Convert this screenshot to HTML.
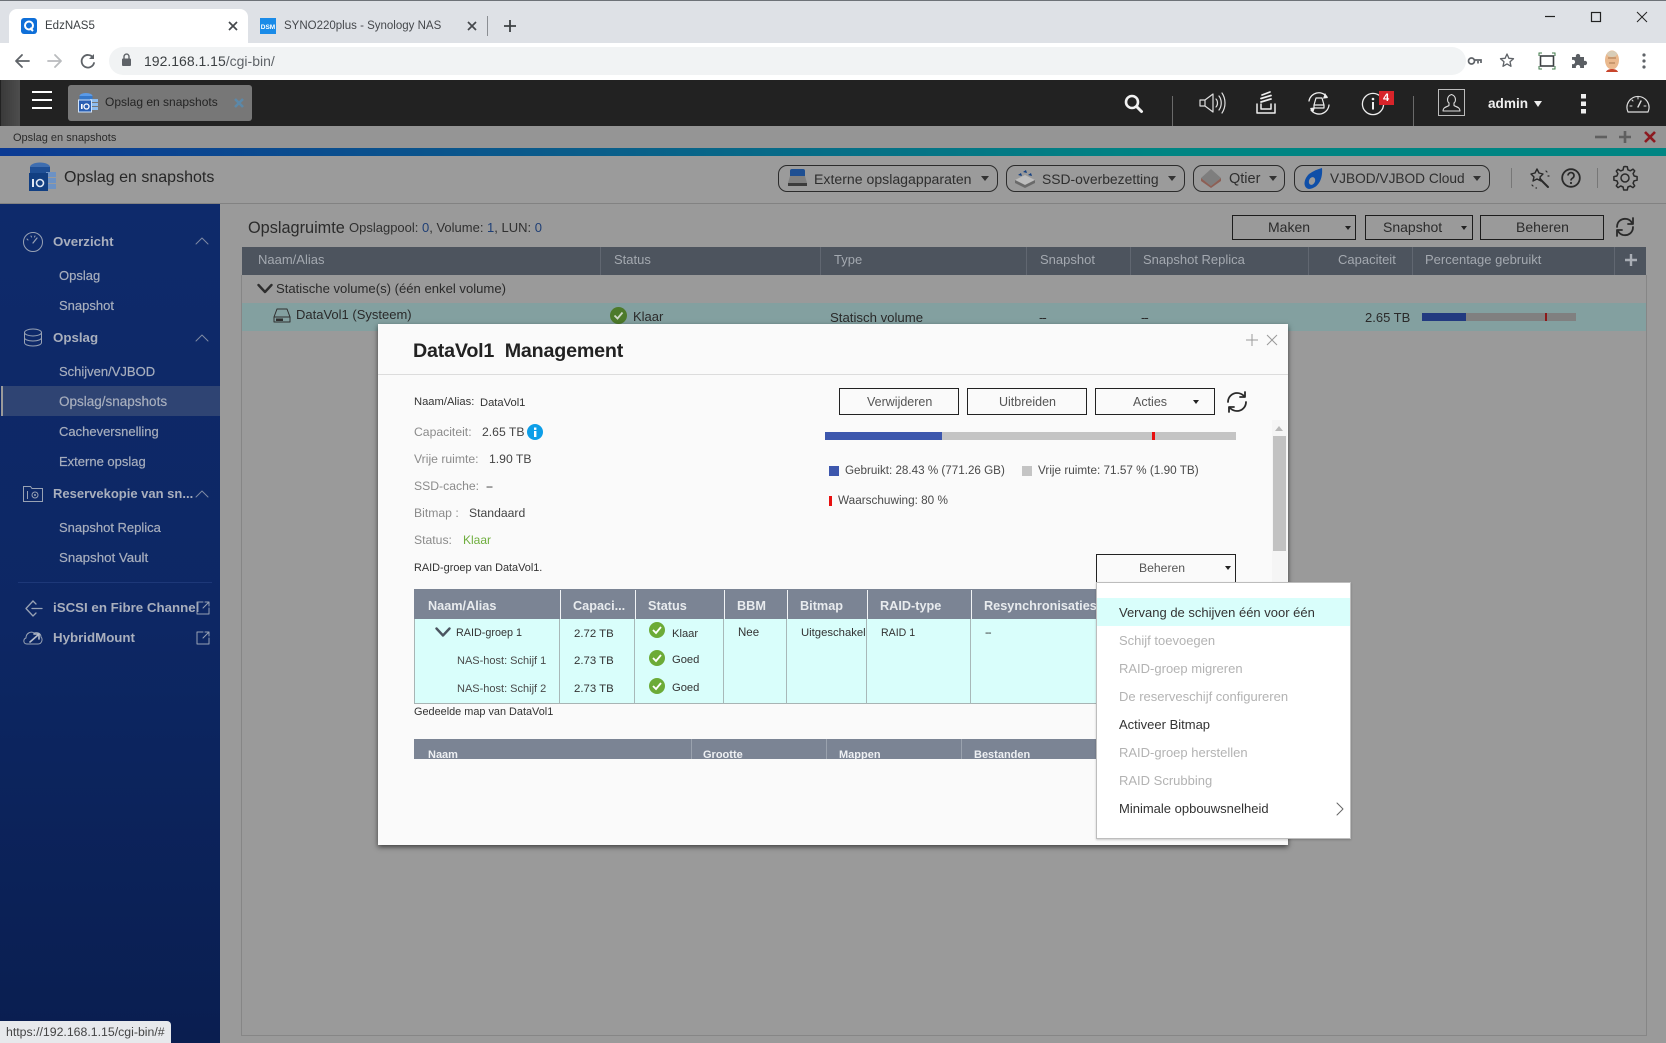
<!DOCTYPE html>
<html><head><meta charset="utf-8"><title>EdzNAS5</title>
<style>
html,body{margin:0;padding:0;width:1666px;height:1043px;overflow:hidden;background:#9a9a9a;font-family:"Liberation Sans",sans-serif}
div,span,svg{position:absolute;box-sizing:border-box}
.t{position:absolute;white-space:nowrap;line-height:0;font-size:12px;color:#333}
.s{fill:none;stroke-linecap:round;stroke-linejoin:round}
.sb{color:#a7aebd;font-size:13px;-webkit-text-stroke:.2px #a7aebd}
.sh{color:#a9afbd;font-size:13.3px;font-weight:bold}
.th{color:#a4a9b0;font-size:13px}
.h2{color:#e8ebee;font-size:12.7px;font-weight:bold}
.btn{border:1px solid #222;background:#fafafa}
.btnd{border:1px solid #1c1c1c}
.pill{border:1px solid #2b2b2b;border-radius:9px;height:27px;top:165px}
.m{font-size:13px;color:#333}
.md{font-size:13px;color:#b3b3b3}
.g{color:#8b8b8b;font-size:12.2px}
.d{color:#444;font-size:12.2px}
.w{color:#333;font-size:11.4px}
.car{width:0;height:0;border-left:4px solid transparent;border-right:4px solid transparent;border-top:5px solid #333}
</style></head><body>

<!-- browser chrome -->
<div style="left:0;top:0;width:1666px;height:43px;background:#dee1e6;border-top:1px solid #6d7278"></div>
<div style="left:9px;top:9px;width:239px;height:34px;background:#fff;border-radius:8px 8px 0 0"></div>
<svg style="left:21px;top:18px" width="16" height="16"><rect width="16" height="16" rx="3" fill="#0f6fd8"/><circle cx="8" cy="7.5" r="4" fill="none" stroke="#fff" stroke-width="2"/><path d="M9 10l3 3" stroke="#fff" stroke-width="2"/></svg>
<span class="t" style="left:45px;top:26px;font-size:11.5px;color:#3c4043">EdzNAS5</span>
<svg style="left:227px;top:20px" width="12" height="12"><path d="M2 2l8 8M10 2l-8 8" stroke="#45484c" stroke-width="1.7"/></svg>
<svg style="left:260px;top:18px" width="16" height="16"><rect width="16" height="16" fill="#1a8be8"/><text x="8" y="11" font-size="6.5" font-weight="bold" text-anchor="middle" fill="#fff" font-family="Liberation Sans">DSM</text></svg>
<span class="t" style="left:284px;top:26px;font-size:11.5px;color:#45484c">SYNO220plus - Synology NAS</span>
<svg style="left:466px;top:20px" width="12" height="12"><path d="M2 2l8 8M10 2l-8 8" stroke="#45484c" stroke-width="1.7"/></svg>
<div style="left:487px;top:16px;width:1px;height:20px;background:#8b8e93"></div>
<svg style="left:503px;top:19px" width="14" height="14"><path d="M7 1v12M1 7h12" stroke="#3c4043" stroke-width="1.8"/></svg>
<svg style="left:1543px;top:10px" width="110" height="16"><path d="M2 6.5h10" stroke="#222" stroke-width="1.2"/><rect x="48.5" y="2.5" width="9" height="9" fill="none" stroke="#222" stroke-width="1.2"/><path d="M94 2l10 10M104 2l-10 10" stroke="#222" stroke-width="1"/></svg>

<div style="left:0;top:43px;width:1666px;height:37px;background:#fff"></div>
<div style="left:109px;top:47px;width:1357px;height:28px;background:#f1f3f4;border-radius:14px"></div>
<svg style="left:14px;top:52px" width="100" height="18"><path d="M15 9H2M8 3L2 9l6 6" class="s" stroke="#5f6368" stroke-width="1.8"/><path d="M34 9h13M41 3l6 6-6 6" class="s" stroke="#b9bbbe" stroke-width="1.8"/><path d="M79 5.5A6.3 6.3 0 1 0 80 11" class="s" stroke="#5f6368" stroke-width="1.8"/><path d="M80 2v5h-5z" fill="#5f6368"/></svg>
<svg style="left:121px;top:53px" width="12" height="14"><rect x="1" y="5.5" width="9" height="7.5" rx="1" fill="#5f6368"/><path d="M3 6V3.6a2.5 2.5 0 0 1 5 0V6" fill="none" stroke="#5f6368" stroke-width="1.4"/></svg>
<span class="t" style="left:144px;top:61px;font-size:14px;color:#3c4043">192.168.1.15<span style="position:static;color:#5f6368">/cgi-bin/</span></span>
<svg style="left:1467px;top:54px" width="16" height="14"><circle cx="4.5" cy="7" r="3" fill="none" stroke="#5f6368" stroke-width="1.7"/><path d="M7 6h7v3M11 7v2.5" fill="none" stroke="#5f6368" stroke-width="1.7"/></svg>
<svg style="left:1499px;top:52px" width="16" height="17"><path d="M8 2l1.9 4.3 4.6.4-3.5 3 1 4.6L8 11.9l-4 2.4 1-4.6-3.5-3 4.6-.4z" fill="none" stroke="#5f6368" stroke-width="1.3" stroke-linejoin="round"/></svg>
<svg style="left:1538px;top:52px" width="18" height="18"><path d="M1 4V1h3M14 1h3v3M1 14v3h3M14 17h3v-3" fill="none" stroke="#3f7a4a" stroke-width="1"/><rect x="2.5" y="4" width="13" height="10" fill="none" stroke="#3c4043" stroke-width="1.6"/></svg>
<svg style="left:1571px;top:52px" width="17" height="17"><path d="M1 5h4a2.2 2.2 0 1 1 4 0h4v4a2.2 2.2 0 1 1 0 4v3H9a2.2 2.2 0 1 0-4 0H1v-4a2.2 2.2 0 1 0 0-4z" fill="#5a5e63"/></svg>
<svg style="left:1602px;top:50px" width="20" height="23"><ellipse cx="10" cy="10" rx="7" ry="9.5" fill="#eab98e"/><path d="M6 8h8M7 13h6" stroke="#a8774f" stroke-width="1"/><ellipse cx="10" cy="4" rx="5" ry="3" fill="#d8cdb8"/><path d="M4 22c1-4 11-4 12 0z" fill="#c8452c"/></svg>
<svg style="left:1641px;top:52px" width="6" height="18"><circle cx="3" cy="3" r="1.6" fill="#5f6368"/><circle cx="3" cy="9" r="1.6" fill="#5f6368"/><circle cx="3" cy="15" r="1.6" fill="#5f6368"/></svg>

<!-- QTS bar -->
<div style="left:0;top:80px;width:1666px;height:46px;background:#222"></div>
<div style="left:1px;top:80px;width:19px;height:46px;background:linear-gradient(90deg,#3a3a3a,#4d4d4d)"></div>
<svg style="left:32px;top:91px" width="20" height="18"><path d="M0 1h20M0 9h20M0 17h20" stroke="#fff" stroke-width="2"/></svg>
<div style="left:68px;top:85px;width:184px;height:36px;background:#777;border-radius:3px"></div>
<svg style="left:78px;top:92px" width="21" height="21"><ellipse cx="8" cy="4" rx="6.5" ry="3" fill="#5b9be8"/><rect x="1.5" y="4" width="13" height="5" fill="#3577c9"/><rect x="12" y="7" width="8" height="3" fill="#8ebdf0"/><rect x="12" y="11" width="8" height="3" fill="#8ebdf0"/><rect x="12" y="15" width="8" height="3" fill="#8ebdf0"/><rect x="0.5" y="8" width="13" height="12" fill="#2a5fb3" stroke="#cfe3fa"/><rect x="3" y="12" width="1.6" height="5" fill="#fff"/><circle cx="8.5" cy="14.5" r="2.5" fill="none" stroke="#fff" stroke-width="1.3"/></svg>
<span class="t" style="left:105px;top:102px;color:#242424;font-size:12px">Opslag en snapshots</span>
<svg style="left:234px;top:98px" width="10" height="10"><path d="M1 1l8 8M9 1l-8 8" stroke="#5c88a8" stroke-width="2.6"/></svg>

<svg style="left:1124px;top:94px" width="20" height="20"><circle cx="8" cy="8" r="6" fill="none" stroke="#f2f2f2" stroke-width="2.6"/><path d="M12.5 12.5l5 5" stroke="#f2f2f2" stroke-width="3" stroke-linecap="round"/></svg>
<div style="left:1172px;top:96px;width:1px;height:30px;background:#6a6a6a"></div>
<svg style="left:1198px;top:91px" width="28" height="24" class="s"><path d="M2 9v6h5l8 6V3L7 9z M7 9v6" stroke="#ddd" stroke-width="1.2"/><path d="M18 8c2 2 2 6 0 8M21 5c3 4 3 10 0 14M24 2c4 6 4 14 0 20" stroke="#ddd" stroke-width="1.2"/></svg>
<svg style="left:1255px;top:91px" width="22" height="24" class="s"><path d="M2 13v9h18v-9M6 13v5h10v-5" stroke="#eee" stroke-width="1.5"/><path d="M6 11l10-3M6 7.5l10-3M7 4l8-3" stroke="#eee" stroke-width="1.7"/></svg>
<svg style="left:1307px;top:90px" width="24" height="26" class="s"><path d="M2 11A10 10 0 0 1 20 7M22 15A10 10 0 0 1 4 20" stroke="#eee" stroke-width="1.3"/><path d="M18 3l3 5-5 .6zM6 23l-3-5 5-.6z" fill="#eee" stroke="none"/><path d="M7 15l2-7h6l2 7zM7 15v3h10v-3" stroke="#eee" stroke-width="1.2"/></svg>
<svg style="left:1361px;top:91px" width="24" height="25"><circle cx="12" cy="13" r="10.6" fill="none" stroke="#eee" stroke-width="1.3"/><rect x="11" y="11" width="2" height="7.5" fill="#eee"/><circle cx="12" cy="8" r="1.3" fill="#eee"/></svg>
<div style="left:1379px;top:91px;width:15px;height:14px;background:#d8242a"></div>
<span class="t" style="left:1383px;top:98px;color:#fff;font-size:11px;font-weight:bold">4</span>
<div style="left:1413px;top:96px;width:1px;height:30px;background:#6a6a6a"></div>
<div style="left:1438px;top:89px;width:27px;height:27px;border:1px solid #bbb"></div>
<svg style="left:1440px;top:91px" width="23" height="23" class="s"><path d="M3 20c0-4 4-4 6-5.5V12c-2-1.500-2.500-7 2.500-8.500 5 1.500 4.500 7 2.500 8.500v2.500c2 1.500 6 1.500 6 5.500z" stroke="#ddd" stroke-width="1.1"/></svg>
<span class="t" style="left:1488px;top:104px;color:#f0f0f0;font-size:13.6px;font-weight:bold">admin</span>
<div class="car" style="left:1534px;top:101px;border-top-color:#eee;border-left-width:4.500px;border-right-width:4.500px;border-top-width:6px"></div>
<svg style="left:1581px;top:94px" width="6" height="20"><rect width="5" height="4.500" fill="#eee"/><rect y="7.500" width="5" height="4.500" fill="#eee"/><rect y="15" width="5" height="4.500" fill="#eee"/></svg>
<svg style="left:1625px;top:92px" width="26" height="22" class="s"><path d="M3 20a11 11 0 1 1 20 0z" stroke="#ddd" stroke-width="1.2"/><path d="M13 15l3-6" stroke="#ddd" stroke-width="1.4"/><path d="M5 14h2M13 5v2M19 14h2M7 8l1 1" stroke="#ddd" stroke-width="1"/></svg>

<!-- window bar -->
<div style="left:0;top:126px;width:1666px;height:22px;background:#959595"></div>
<span class="t" style="left:13px;top:138px;color:#2a2a2a;font-size:11px">Opslag en snapshots</span>
<svg style="left:1594px;top:131px" width="64" height="12"><path d="M1 6h12" stroke="#5f5f5f" stroke-width="2.6"/><path d="M25 6h12M31 0v12" stroke="#5f5f5f" stroke-width="2.6"/><path d="M51 1l10 10M61 1L51 11" stroke="#8c1a20" stroke-width="2.6"/></svg>
<div style="left:0;top:148px;width:1666px;height:8px;background:linear-gradient(90deg,#0b3a93 0%,#0a5d8a 35%,#008583 70%,#008583 100%)"></div>
<div style="left:0;top:156px;width:1666px;height:48px;background:#9b9b9b;border-bottom:1px solid #828282"></div>
<svg style="left:28px;top:161px" width="29" height="31"><ellipse cx="12" cy="6" rx="10" ry="4.500" fill="#3f6eb0"/><rect x="2" y="6" width="20" height="7" fill="#1f4f95"/><rect x="18" y="11" width="10" height="5" fill="#6d92c4"/><rect x="18" y="17" width="10" height="5" fill="#6d92c4"/><rect x="18" y="23" width="10" height="5" fill="#6d92c4"/><rect x="1" y="12" width="19" height="18" fill="#123f82"/><rect x="4" y="18" width="2" height="8" fill="#dfe7f3"/><circle cx="12" cy="22" r="3.500" fill="none" stroke="#dfe7f3" stroke-width="1.600"/></svg>
<span class="t" style="left:64px;top:178px;font-size:16px;color:#262626">Opslag en snapshots</span>

<div class="pill" style="left:778px;width:220px"></div>
<svg style="left:787px;top:168px" width="21" height="20"><rect x="3" y="1" width="15" height="9" rx="2" fill="#1e4f92"/><path d="M3 8h15l2 7H1z" fill="#808080"/><rect x="1" y="15" width="19" height="3" fill="#3c3c3c"/></svg>
<span class="t" style="left:814px;top:179px;font-size:14.1px;color:#2e2e2e">Externe opslagapparaten</span>
<div class="car" style="left:981px;top:176px"></div>
<div class="pill" style="left:1006px;width:179px"></div>
<svg style="left:1014px;top:168px" width="22" height="20"><path d="M1 12l10-5 10 5-10 5z" fill="#bdbdbd"/><path d="M1 12v3l10 5 10-5v-3l-10 5z" fill="#6a6a6a"/><path d="M4 7l3-2 1 3zM9 4l3-2 1 3zM14 7l3-2 1 3z" fill="#123f82"/></svg>
<span class="t" style="left:1042px;top:179px;font-size:13.9px;color:#2e2e2e">SSD-overbezetting</span>
<div class="car" style="left:1168px;top:176px"></div>
<div class="pill" style="left:1193px;width:92px"></div>
<svg style="left:1200px;top:168px" width="23" height="21"><path d="M11 1l10 9-10 8-10-8z" fill="#7e7e7e"/><path d="M1 10l10 8 10-8v3l-10 7-10-7z" fill="#8d5f55"/></svg>
<span class="t" style="left:1229px;top:179px;font-size:14.5px;color:#2e2e2e">Qtier</span>
<div class="car" style="left:1269px;top:176px"></div>
<div class="pill" style="left:1294px;width:196px"></div>
<svg style="left:1303px;top:167px" width="21" height="23"><path d="M19 1c1 10-3 20-13 21C0 21 0 13 6 7c4-3 9-5 13-6z" fill="#0f4fa8"/><ellipse cx="9" cy="14" rx="3" ry="4" fill="#9b9b9b" transform="rotate(25 9 14)"/></svg>
<span class="t" style="left:1330px;top:179px;font-size:13.7px;color:#2e2e2e">VJBOD/VJBOD Cloud</span>
<div class="car" style="left:1473px;top:176px"></div>
<div style="left:1511px;top:168px;width:1px;height:20px;background:#777"></div>
<svg style="left:1528px;top:167px" width="22" height="23" class="s"><path d="M9 2l2 4 4 1-3 3 1 4-4-2-4 2 1-4-3-3 4-1z" stroke="#2a2a2a" stroke-width="1.400"/><path d="M12 12l8 8" stroke="#2a2a2a" stroke-width="2"/><path d="M18 4l1 1M20 9h1M4 18l1 1M8 21h.5" stroke="#2a2a2a" stroke-width="1.200"/></svg>
<svg style="left:1561px;top:168px" width="20" height="20"><circle cx="10" cy="10" r="8.800" fill="none" stroke="#2a2a2a" stroke-width="1.800"/><path d="M7 7.500a3 3 0 1 1 4.500 2.700c-1 .6-1.500 1-1.500 2.300" fill="none" stroke="#2a2a2a" stroke-width="1.700"/><circle cx="10" cy="15" r="1.100" fill="#2a2a2a"/></svg>
<div style="left:1597px;top:168px;width:1px;height:20px;background:#777"></div>
<svg style="left:1612px;top:165px" width="26" height="26" class="s"><path d="M13 1.500l2.300.3.600 3 2.400 1 2.700-1.600 1.700 1.700-1.600 2.700 1 2.400 3 .6v3.600l-3 .6-1 2.400 1.600 2.700-1.700 1.700-2.700-1.600-2.400 1-.6 3h-3.600l-.6-3-2.400-1-2.700 1.600-1.700-1.700 1.600-2.700-1-2.400-3-.6v-3.600l3-.6 1-2.400L4.300 6l1.700-1.700 2.700 1.600 2.400-1 .6-3z" stroke="#2a2a2a" stroke-width="1.500"/><circle cx="13" cy="13" r="4" stroke="#2a2a2a" stroke-width="1.500"/></svg>

<!-- sidebar -->
<div style="left:0;top:204px;width:220px;height:839px;background:linear-gradient(180deg,#0e2a6b 0%,#0d2764 50%,#0a1e50 100%)"></div>
<div style="left:1px;top:386px;width:219px;height:30px;background:#2f4473"></div>
<div style="left:1px;top:386px;width:2px;height:30px;background:#9a9a9a"></div>
<svg style="left:22px;top:231px" width="22" height="22" class="s"><circle cx="11" cy="11" r="9.500" stroke="#98a2b4" stroke-width="1"/><path d="M11 12l4-5" stroke="#98a2b4" stroke-width="1.200"/><path d="M5 8l1 1M9 5l.5 1M13 5l-.5 1" stroke="#98a2b4"/></svg>
<span class="t sh" style="left:53px;top:242px">Overzicht</span>
<svg style="left:195px;top:236px" width="14" height="10" class="s"><path d="M1 8l6-6 6 6" stroke="#7f8aa3" stroke-width="1"/></svg>
<span class="t sb" style="left:59px;top:276px">Opslag</span>
<span class="t sb" style="left:59px;top:306px">Snapshot</span>
<svg style="left:23px;top:328px" width="20" height="20" class="s"><ellipse cx="10" cy="4.500" rx="8.500" ry="3.500" stroke="#98a2b4"/><path d="M1.500 4.500v10c0 2 3.500 3.500 8.500 3.500s8.500-1.500 8.500-3.500v-10M1.500 9.500c0 2 3.500 3.500 8.500 3.500s8.500-1.500 8.500-3.500" stroke="#98a2b4"/></svg>
<span class="t sh" style="left:53px;top:338px">Opslag</span>
<svg style="left:195px;top:333px" width="14" height="10" class="s"><path d="M1 8l6-6 6 6" stroke="#7f8aa3" stroke-width="1"/></svg>
<span class="t sb" style="left:59px;top:372px">Schijven/VJBOD</span>
<span class="t sb" style="left:59px;top:402px;font-size:13.5px">Opslag/snapshots</span>
<span class="t sb" style="left:59px;top:432px">Cacheversnelling</span>
<span class="t sb" style="left:59px;top:462px">Externe opslag</span>
<svg style="left:23px;top:486px" width="20" height="16"><path d="M.5 15.500V.5h7l1.500 2H19.500v13z" fill="none" stroke="#98a2b4"/><circle cx="12" cy="9" r="3" fill="none" stroke="#98a2b4"/><circle cx="12" cy="9" r="1" fill="#98a2b4"/><path d="M4.500 5v8" stroke="#98a2b4"/></svg>
<span class="t sh" style="left:53px;top:494px;font-size:13px">Reservekopie van sn...</span>
<svg style="left:195px;top:489px" width="14" height="10" class="s"><path d="M1 8l6-6 6 6" stroke="#7f8aa3" stroke-width="1"/></svg>
<span class="t sb" style="left:59px;top:528px">Snapshot Replica</span>
<span class="t sb" style="left:59px;top:558px;font-size:13.3px">Snapshot Vault</span>
<div style="left:18px;top:582px;width:194px;height:1px;background:#1d3878"></div>
<svg style="left:24px;top:600px" width="19" height="17" class="s"><path d="M9 1L2 8.500 9 16M9 1l3 3M9 16l3-3M8 8.500h10" stroke="#98a2b4" stroke-width="1.300"/></svg>
<span class="t sh" style="left:53px;top:608px">iSCSI en Fibre Channel</span>
<svg style="left:196px;top:601px" width="14" height="14" class="s"><path d="M7 1H1v12h12V7M7 7l6-6M9 1h4v4" stroke="#98a2b4"/></svg>
<svg style="left:23px;top:630px" width="21" height="15" class="s"><path d="M4 14c-4 0-4-5-1-6C3 3 8 1 11 3c3-1 7 0 7 4 2 2 1 7-3 7z" stroke="#98a2b4"/><path d="M7 12l8-7M11 4h5v5" stroke="#b6bdca" stroke-width="1.600"/></svg>
<span class="t sh" style="left:53px;top:638px">HybridMount</span>
<svg style="left:196px;top:631px" width="14" height="14" class="s"><path d="M7 1H1v12h12V7M7 7l6-6M9 1h4v4" stroke="#98a2b4"/></svg>

<!-- main panel -->
<div style="left:241px;top:275px;width:1406px;height:761px;border:1px solid #868686;border-top:0"></div>
<span class="t" style="left:248px;top:228px;font-size:16.3px;color:#2b2b2b">Opslagruimte</span>
<span class="t" style="left:349px;top:228px;font-size:13px;color:#303030">Opslagpool: <span style="position:static;color:#1f3f76">0</span>, Volume: <span style="position:static;color:#1f3f76">1</span>, LUN: <span style="position:static;color:#1f3f76">0</span></span>
<div class="btnd" style="left:1232px;top:215px;width:124px;height:25px"></div>
<span class="t" style="left:1268px;top:227px;font-size:14px;color:#2b2b2b">Maken</span>
<div class="car" style="left:1345px;top:226px;border-left-width:3px;border-right-width:3px;border-top-width:4px;border-top-color:#222"></div>
<div class="btnd" style="left:1365px;top:215px;width:108px;height:25px"></div>
<span class="t" style="left:1383px;top:227px;font-size:14px;color:#2b2b2b">Snapshot</span>
<div class="car" style="left:1461px;top:226px;border-left-width:3px;border-right-width:3px;border-top-width:4px;border-top-color:#222"></div>
<div class="btnd" style="left:1480px;top:215px;width:124px;height:25px"></div>
<span class="t" style="left:1516px;top:227px;font-size:14px;color:#2b2b2b">Beheren</span>
<svg style="left:1615px;top:216px" width="20" height="22" class="s"><path d="M2 11C2 5 7 2 12 3c2 .5 4 2 5 4M18 11c0 6-5 9-10 8-2-.5-4-2-5-4" stroke="#2a2a2a" stroke-width="1.800"/><path d="M18 2v6h-5M2 20v-6h5" stroke="#2a2a2a" stroke-width="1.800"/></svg>

<div style="left:242px;top:247px;width:1404px;height:28px;background:#4d545e"></div>
<div style="left:600px;top:247px;width:1px;height:28px;background:#616771"></div>
<div style="left:820px;top:247px;width:1px;height:28px;background:#616771"></div>
<div style="left:1026px;top:247px;width:1px;height:28px;background:#616771"></div>
<div style="left:1130px;top:247px;width:1px;height:28px;background:#616771"></div>
<div style="left:1308px;top:247px;width:1px;height:28px;background:#616771"></div>
<div style="left:1412px;top:247px;width:1px;height:28px;background:#616771"></div>
<div style="left:1614px;top:247px;width:1px;height:28px;background:#616771"></div>
<span class="t th" style="left:258px;top:260px">Naam/Alias</span>
<span class="t th" style="left:614px;top:260px">Status</span>
<span class="t th" style="left:834px;top:260px">Type</span>
<span class="t th" style="left:1040px;top:260px">Snapshot</span>
<span class="t th" style="left:1143px;top:260px">Snapshot Replica</span>
<span class="t th" style="left:1338px;top:260px">Capaciteit</span>
<span class="t th" style="left:1425px;top:260px">Percentage gebruikt</span>
<svg style="left:1625px;top:254px" width="12" height="12"><path d="M6 0v12M0 6h12" stroke="#a9aeb5" stroke-width="2.400"/></svg>

<svg style="left:257px;top:283px" width="16" height="11" class="s"><path d="M1.500 2l6.500 7 6.500-7" stroke="#2e2e2e" stroke-width="2.400"/></svg>
<span class="t" style="left:276px;top:289px;font-size:13.1px;color:#2a2a2a">Statische volume(s) (één enkel volume)</span>
<div style="left:242px;top:303px;width:1404px;height:28px;background:#83a0a0"></div>
<svg style="left:273px;top:308px" width="18" height="15" class="s"><path d="M1 9l3-8h10l3 8v5H1zM1 9h16" stroke="#2f2f2f"/><rect x="3" y="10.500" width="7" height="2.500" fill="#2f2f2f"/></svg>
<span class="t" style="left:296px;top:315px;font-size:13px;color:#2a2a2a">DataVol1 (Systeem)</span>
<svg style="left:610px;top:307px" width="17" height="17"><circle cx="8.500" cy="8.500" r="8.500" fill="#4d7a2a"/><path d="M4.500 8.500l3 3 5-6" fill="none" stroke="#cfd8c8" stroke-width="1.800"/></svg>
<span class="t" style="left:633px;top:317px;font-size:13px;color:#2a2a2a">Klaar</span>
<span class="t" style="left:830px;top:318px;font-size:13.2px;color:#2a2a2a">Statisch volume</span>
<span class="t" style="left:1039px;top:318px;font-size:13px;color:#2a2a2a;letter-spacing:-1px">--</span>
<span class="t" style="left:1141px;top:318px;font-size:13px;color:#2a2a2a;letter-spacing:-1px">--</span>
<span class="t" style="left:1365px;top:318px;font-size:13px;color:#2a2a2a">2.65 TB</span>
<div style="left:1422px;top:313px;width:154px;height:8px;background:#808080"></div>
<div style="left:1422px;top:313px;width:44px;height:8px;background:#223a80"></div>
<div style="left:1545px;top:313px;width:2px;height:8px;background:#8c1a1a"></div>

<!-- dialog -->
<div style="left:378px;top:324px;width:910px;height:521px;background:#fafafa;box-shadow:0 2px 5px rgba(0,0,0,.6)"></div>
<span class="t" style="left:413px;top:351px;font-size:19.700px;font-weight:bold;color:#222;letter-spacing:-.2px">DataVol1&nbsp; Management</span>
<div style="left:378px;top:374px;width:910px;height:1px;background:#dcdcdc"></div>
<svg style="left:1246px;top:333px" width="34" height="14"><path d="M6 1v12M0 7h12" stroke="#9a9a9a"/><path d="M21 2l10 10M31 2L21 12" stroke="#9a9a9a"/></svg>

<span class="t w" style="left:414px;top:402px;font-size:11.200px">Naam/Alias:</span><span class="t w" style="left:480px;top:403px;font-size:11.200px">DataVol1</span>
<span class="t g" style="left:414px;top:432px">Capaciteit:</span><span class="t d" style="left:482px;top:432px">2.65 TB</span>
<svg style="left:527px;top:424px" width="16" height="16"><circle cx="8" cy="8" r="8" fill="#0d9ee8"/><rect x="7" y="7" width="2.400" height="6" fill="#fff"/><rect x="7" y="3.500" width="2.400" height="2.400" fill="#fff"/></svg>
<span class="t g" style="left:414px;top:459px">Vrije ruimte:</span><span class="t d" style="left:489px;top:459px">1.90 TB</span>
<span class="t g" style="left:414px;top:486px">SSD-cache:</span><span class="t d" style="left:486px;top:486px;letter-spacing:-1px">--</span>
<span class="t g" style="left:414px;top:513px">Bitmap :</span><span class="t d" style="left:469px;top:513px">Standaard</span>
<span class="t g" style="left:414px;top:540px">Status:</span><span class="t" style="left:463px;top:540px;font-size:12px;color:#6fae3e">Klaar</span>
<span class="t w" style="left:414px;top:568px;font-size:10.900px">RAID-groep van DataVol1.</span>

<div class="btn" style="left:839px;top:388px;width:120px;height:27px"></div>
<span class="t d" style="left:867px;top:402px;color:#555;font-size:12.500px">Verwijderen</span>
<div class="btn" style="left:967px;top:388px;width:120px;height:27px"></div>
<span class="t d" style="left:999px;top:402px;color:#555;font-size:12.500px">Uitbreiden</span>
<div class="btn" style="left:1095px;top:388px;width:120px;height:27px"></div>
<span class="t d" style="left:1133px;top:402px;color:#555;font-size:12.500px">Acties</span>
<div class="car" style="left:1193px;top:400px;border-left-width:3px;border-right-width:3px;border-top-width:4px;border-top-color:#222"></div>
<svg style="left:1226px;top:391px" width="22" height="22" class="s"><path d="M2 11C2 6 6 2 11 2c3 0 5 1 7 3M20 11c0 5-4 9-9 9-3 0-5-1-7-3" stroke="#2a2a2a" stroke-width="1.800"/><path d="M19 1v5h-5M3 21v-5h5" stroke="#2a2a2a" stroke-width="1.800"/></svg>

<div style="left:825px;top:432px;width:411px;height:8px;background:#c4c4c4"></div>
<div style="left:825px;top:432px;width:117px;height:8px;background:#3d57ad"></div>
<div style="left:1152px;top:432px;width:3px;height:8px;background:#e81010"></div>
<div style="left:829px;top:466px;width:10px;height:10px;background:#3d57ad"></div>
<span class="t d" style="left:845px;top:471px;font-size:11.650px;color:#4a4a4a">Gebruikt: 28.43 % (771.26 GB)</span>
<div style="left:1022px;top:466px;width:10px;height:10px;background:#c4c4c4"></div>
<span class="t d" style="left:1038px;top:471px;font-size:11.750px;color:#4a4a4a">Vrije ruimte: 71.57 % (1.90 TB)</span>
<div style="left:829px;top:496px;width:3px;height:10px;background:#e81010"></div>
<span class="t d" style="left:838px;top:501px;font-size:11.750px;color:#4a4a4a">Waarschuwing: 80 %</span>

<div style="left:1272px;top:420px;width:15px;height:415px;background:#f5f5f5"></div>
<div style="left:1273px;top:436px;width:13px;height:115px;background:#c2c2c2"></div>
<div style="left:1275px;top:426px;width:0;height:0;border-left:4.500px solid transparent;border-right:4.500px solid transparent;border-bottom:5px solid #b8b8b8"></div>

<!-- RAID table -->
<div style="left:414px;top:589px;width:701px;height:30px;background:#7b8494"></div>
<div style="left:414px;top:619px;width:701px;height:85px;background:#d9fefb;border-bottom:1px solid #a8b4b4;border-left:1px solid #a8b4b4"></div>
<div style="left:560px;top:590px;width:1px;height:29px;background:#f2f4f6"></div>
<div style="left:635px;top:590px;width:1px;height:29px;background:#f2f4f6"></div>
<div style="left:724px;top:590px;width:1px;height:29px;background:#f2f4f6"></div>
<div style="left:787px;top:590px;width:1px;height:29px;background:#f2f4f6"></div>
<div style="left:867px;top:590px;width:1px;height:29px;background:#f2f4f6"></div>
<div style="left:971px;top:590px;width:1px;height:29px;background:#f2f4f6"></div>
<div style="left:559px;top:619px;width:1px;height:85px;background:#a8b8b8"></div>
<div style="left:634px;top:619px;width:1px;height:85px;background:#a8b8b8"></div>
<div style="left:723px;top:619px;width:1px;height:85px;background:#a8b8b8"></div>
<div style="left:786px;top:619px;width:1px;height:85px;background:#a8b8b8"></div>
<div style="left:866px;top:619px;width:1px;height:85px;background:#a8b8b8"></div>
<div style="left:970px;top:619px;width:1px;height:85px;background:#a8b8b8"></div>
<span class="t h2" style="left:428px;top:606px">Naam/Alias</span>
<span class="t h2" style="left:573px;top:606px">Capaci...</span>
<span class="t h2" style="left:648px;top:606px">Status</span>
<span class="t h2" style="left:737px;top:606px">BBM</span>
<span class="t h2" style="left:800px;top:606px">Bitmap</span>
<span class="t h2" style="left:880px;top:606px">RAID-type</span>
<span class="t h2" style="left:984px;top:606px">Resynchronisatiesnelheid</span>

<svg style="left:435px;top:627px" width="16" height="11" class="s"><path d="M1.500 1.500l6.500 7 6.500-7" stroke="#4b5560" stroke-width="2.400"/></svg>
<span class="t w" style="left:456px;top:633px;font-size:10.800px">RAID-groep 1</span>
<span class="t w" style="left:574px;top:634px">2.72 TB</span>
<svg style="left:649px;top:622px" width="16" height="16"><circle cx="8" cy="8" r="8" fill="#6cab37"/><path d="M4 8l3 3 5-6" fill="none" stroke="#fff" stroke-width="1.800"/></svg>
<span class="t w" style="left:672px;top:634px;font-size:11.200px">Klaar</span>
<span class="t w" style="left:738px;top:633px;font-size:11.500px">Nee</span>
<span class="t w" style="left:801px;top:633px;font-size:11.300px">Uitgeschakel</span>
<span class="t w" style="left:881px;top:633px;font-size:10.600px">RAID 1</span>
<span class="t w" style="left:985px;top:633px;letter-spacing:-1px">--</span>
<span class="t w" style="left:457px;top:661px;color:#4a4a4a;font-size:11px">NAS-host: Schijf 1</span>
<span class="t w" style="left:574px;top:661px">2.73 TB</span>
<svg style="left:649px;top:650px" width="16" height="16"><circle cx="8" cy="8" r="8" fill="#6cab37"/><path d="M4 8l3 3 5-6" fill="none" stroke="#fff" stroke-width="1.800"/></svg>
<span class="t w" style="left:672px;top:660px;font-size:11.200px">Goed</span>
<span class="t w" style="left:457px;top:689px;color:#4a4a4a;font-size:11px">NAS-host: Schijf 2</span>
<span class="t w" style="left:574px;top:689px">2.73 TB</span>
<svg style="left:649px;top:678px" width="16" height="16"><circle cx="8" cy="8" r="8" fill="#6cab37"/><path d="M4 8l3 3 5-6" fill="none" stroke="#fff" stroke-width="1.800"/></svg>
<span class="t w" style="left:672px;top:688px;font-size:11.200px">Goed</span>
<span class="t w" style="left:414px;top:712px;font-size:10.900px">Gedeelde map van DataVol1</span>

<div style="left:414px;top:739px;width:701px;height:20px;background:#7b8494;overflow:hidden">
<span class="t" style="left:14px;top:16px;color:#eef0f3;font-size:11px;font-weight:bold">Naam</span>
<span class="t" style="left:289px;top:16px;color:#eef0f3;font-size:11px;font-weight:bold">Grootte</span>
<span class="t" style="left:425px;top:16px;color:#eef0f3;font-size:11px;font-weight:bold">Mappen</span>
<span class="t" style="left:560px;top:16px;color:#eef0f3;font-size:11px;font-weight:bold">Bestanden</span>
<div style="left:277px;top:0;width:1px;height:20px;background:#9aa2ae"></div>
<div style="left:412px;top:0;width:1px;height:20px;background:#9aa2ae"></div>
<div style="left:547px;top:0;width:1px;height:20px;background:#9aa2ae"></div>
</div>

<!-- Beheren + menu -->
<div class="btn" style="left:1096px;top:554px;width:140px;height:29px"></div>
<span class="t d" style="left:1139px;top:568px;color:#555">Beheren</span>
<div class="car" style="left:1225px;top:566px;border-left-width:3px;border-right-width:3px;border-top-width:4px;border-top-color:#222"></div>
<div style="left:1096px;top:582px;width:255px;height:257px;background:#fff;border:1px solid #bdbdbd;box-shadow:0 1px 2px rgba(0,0,0,.2)"></div>
<div style="left:1097px;top:598px;width:253px;height:28px;background:#d9fefb"></div>
<span class="t m" style="left:1119px;top:613px">Vervang de schijven één voor één</span>
<span class="t md" style="left:1119px;top:641px">Schijf toevoegen</span>
<span class="t md" style="left:1119px;top:669px">RAID-groep migreren</span>
<span class="t md" style="left:1119px;top:697px">De reserveschijf configureren</span>
<span class="t m" style="left:1119px;top:725px">Activeer Bitmap</span>
<span class="t md" style="left:1119px;top:753px">RAID-groep herstellen</span>
<span class="t md" style="left:1119px;top:781px">RAID Scrubbing</span>
<span class="t m" style="left:1119px;top:809px">Minimale opbouwsnelheid</span>
<svg style="left:1335px;top:802px" width="10" height="14" class="s"><path d="M2 1l6 6-6 6" stroke="#666" stroke-width="1"/></svg>

<!-- status bubble -->
<div style="left:0;top:1021px;width:171px;height:22px;background:#e7e9ec;border-radius:0 4px 0 0"></div>
<span class="t" style="left:6px;top:1032px;font-size:12.300px;color:#444">https://192.168.1.15/cgi-bin/#</span>
</body></html>
